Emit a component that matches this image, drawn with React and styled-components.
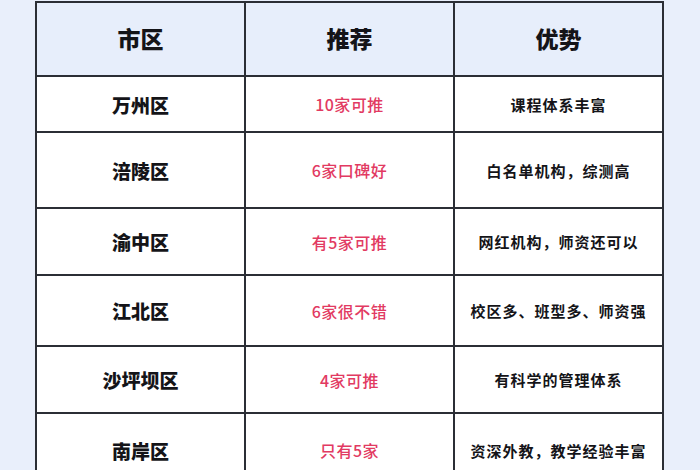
import React from 'react'
import styled, { createGlobalStyle } from 'styled-components'

const GlobalStyle = createGlobalStyle`
  html, body {
    margin: 0;
    padding: 0;
    background: #e9effb;
  }
  body {
    font-family: "Noto Sans CJK SC", "Noto Sans", sans-serif;
    overflow: hidden;
  }
`

const Page = styled('div')`
  width: 700px;
  height: 470px;
  padding: 1px 0 0 35px;
  box-sizing: border-box;
  overflow: hidden;
`

const Table = styled('div')`
  width: 629px;
  border-top: 2px solid #2b2e35;
  border-left: 2px solid #2b2e35;
  box-sizing: border-box;
`

const Row = styled('div')`
  display: grid;
  grid-template-columns: 1fr 1fr 1fr;
  height: ${p => p.$h}px;
  background: ${p => (p.$head ? '#e7eefb' : '#ffffff')};
`

const Cell = styled('div')`
  display: flex;
  align-items: center;
  justify-content: center;
  border-right: 2px solid #2b2e35;
  border-bottom: 2px solid #2b2e35;
  color: #141418;
  font-weight: 900;
  font-size: 19px;
  white-space: nowrap;
`

const HeadCell = styled(Cell)`
  font-size: 23px;
  padding-bottom: 2px;
`

const PickCell = styled(Cell)`
  color: #e23a62;
  font-size: 16px;
  font-weight: 500;
  letter-spacing: 0.5px;
`

const NoteCell = styled(Cell)`
  font-size: 15px;
  font-weight: 700;
  letter-spacing: 1px;
`

const rows = [
  { city: '万州区', pick: '10家可推', note: '课程体系丰富', h: 56 },
  { city: '涪陵区', pick: '6家口碑好', note: '白名单机构，综测高', h: 76 },
  { city: '渝中区', pick: '有5家可推', note: '网红机构，师资还可以', h: 67 },
  { city: '江北区', pick: '6家很不错', note: '校区多、班型多、师资强', h: 71 },
  { city: '沙坪坝区', pick: '4家可推', note: '有科学的管理体系', h: 67 },
  { city: '南岸区', pick: '只有5家', note: '资深外教，教学经验丰富', h: 74 },
]

const App = () => (
  <Page>
    <GlobalStyle />
    <Table>
      <Row $head $h={74}>
        <HeadCell>市区</HeadCell>
        <HeadCell>推荐</HeadCell>
        <HeadCell>优势</HeadCell>
      </Row>
      {rows.map((r, i) => (
        <Row key={i} $h={r.h}>
          <Cell>{r.city}</Cell>
          <PickCell>{r.pick}</PickCell>
          <NoteCell>{r.note}</NoteCell>
        </Row>
      ))}
    </Table>
  </Page>
)

export default App
